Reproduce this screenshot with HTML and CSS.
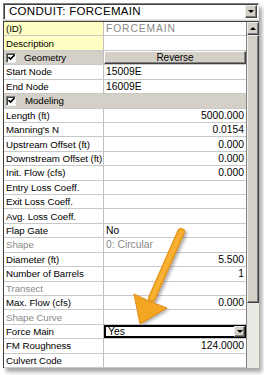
FILE: index.html
```html
<!DOCTYPE html>
<html>
<head>
<meta charset="utf-8">
<link rel="stylesheet" href="styles.css">
</head>
<body>
<div class="window">
  <div class="combo-head">
    <span class="combo-text">CONDUIT: FORCEMAIN</span>
    <span class="drop-btn"><span class="tri-down"></span></span>
  </div>
  <div class="grid-wrap">
    <div class="grid">
      <div class="row"><div class="lbl yellow">(ID)</div><div class="val gray caps">FORCEMAIN</div></div>
      <div class="row"><div class="lbl yellow">Description</div><div class="val"></div></div>
      <div class="row"><div class="lbl section"><span class="chk"><svg viewBox="0 0 7 7" width="7" height="7"><path d="M0.5 3 L2.5 5 L6.5 1" fill="none" stroke="#000" stroke-width="1.6"/></svg></span>Geometry</div><div class="val btn-cell"><span class="btn">Reverse</span></div></div>
      <div class="row"><div class="lbl">Start Node</div><div class="val">15009E</div></div>
      <div class="row"><div class="lbl">End Node</div><div class="val">16009E</div></div>
      <div class="row full"><div class="lbl section wide"><span class="chk"><svg viewBox="0 0 7 7" width="7" height="7"><path d="M0.5 3 L2.5 5 L6.5 1" fill="none" stroke="#000" stroke-width="1.6"/></svg></span>Modeling</div></div>
      <div class="row"><div class="lbl">Length (ft)</div><div class="val num">5000.000</div></div>
      <div class="row"><div class="lbl">Manning's N</div><div class="val num">0.0154</div></div>
      <div class="row"><div class="lbl">Upstream Offset (ft)</div><div class="val num">0.000</div></div>
      <div class="row"><div class="lbl">Downstream Offset (ft)</div><div class="val num">0.000</div></div>
      <div class="row"><div class="lbl">Init. Flow (cfs)</div><div class="val num">0.000</div></div>
      <div class="row"><div class="lbl">Entry Loss Coeff.</div><div class="val"></div></div>
      <div class="row"><div class="lbl">Exit Loss Coeff.</div><div class="val"></div></div>
      <div class="row"><div class="lbl">Avg. Loss Coeff.</div><div class="val"></div></div>
      <div class="row"><div class="lbl">Flap Gate</div><div class="val">No</div></div>
      <div class="row"><div class="lbl gray">Shape</div><div class="val gray">0: Circular</div></div>
      <div class="row"><div class="lbl">Diameter (ft)</div><div class="val num">5.500</div></div>
      <div class="row"><div class="lbl">Number of Barrels</div><div class="val num">1</div></div>
      <div class="row"><div class="lbl gray">Transect</div><div class="val"></div></div>
      <div class="row"><div class="lbl">Max. Flow (cfs)</div><div class="val num">0.000</div></div>
      <div class="row"><div class="lbl gray">Shape Curve</div><div class="val"></div></div>
      <div class="row"><div class="lbl">Force Main</div><div class="val combo-cell"><span class="combo-in">Yes<span class="drop-btn small"><span class="tri-down"></span></span></span></div></div>
      <div class="row"><div class="lbl">FM Roughness</div><div class="val num">124.0000</div></div>
      <div class="row"><div class="lbl">Culvert Code</div><div class="val"></div></div>
    </div>
    <div class="scrollbar">
      <div class="sb-btn"><span class="tri-up"></span></div>
      <div class="sb-thumb"></div>
      <div class="sb-track"></div>
    </div>
  </div>
</div>
<svg class="arrow" width="264" height="375" viewBox="0 0 264 375">
  <defs>
    <filter id="sh" x="-20%" y="-20%" width="140%" height="140%">
      <feGaussianBlur stdDeviation="1.5"/>
    </filter>
  </defs>
  <g transform="translate(2,2)" opacity="0.45" filter="url(#sh)">
    <line x1="181" y1="232" x2="152" y2="298" stroke="#555" stroke-width="8" stroke-linecap="round"/>
    <path d="M140 324 L134 294 L151 302 L167 308 Z" fill="#555"/>
  </g>
  <line x1="181" y1="232" x2="152" y2="298" stroke="#e8961a" stroke-width="8" stroke-linecap="round"/>
  <line x1="181" y1="232" x2="152" y2="298" stroke="#f7b032" stroke-width="5" stroke-linecap="round"/>
  <path d="M140 324 L134 294 L151 302 L167 308 Z" fill="#f4a623" stroke="#e08e16" stroke-width="1" stroke-linejoin="round"/>
</svg>
</body>
</html>
```

FILE: styles.css
```css
* { box-sizing: border-box; }
html, body { margin: 0; padding: 0; background: #fff; }
body {
  font-family: "Liberation Sans", Arial, sans-serif;
  font-size: 9.5px;
  color: #000;
  width: 264px;
  height: 375px;
  overflow: hidden;
  position: relative;
}
.window {
  margin: 3px 0 0 3px;
  width: 256px;
  height: 365px;
  display: flex;
  flex-direction: column;
  background: #d4d0c8;
  box-shadow: 3px 4px 4px rgba(0,0,0,0.35);
}
.combo-head {
  height: 17px;
  display: flex;
  align-items: center;
  justify-content: space-between;
  background: #fff;
  border-top: 1px solid #808080;
  border-left: 1px solid #808080;
  border-right: 1px solid #e8e8e8;
  border-bottom: 1px solid #e8e8e8;
  box-shadow: inset 1px 1px 0 #404040;
  padding: 1px 1px 1px 5px;
  font-size: 11.5px;
  letter-spacing: 0.3px;
}
.combo-text { line-height: 13px; }
.drop-btn {
  width: 12px;
  height: 13px;
  background: #d4d0c8;
  border-top: 1px solid #f0f0f0;
  border-left: 1px solid #f0f0f0;
  border-right: 1px solid #404040;
  border-bottom: 1px solid #404040;
  box-shadow: inset -1px -1px 0 #808080;
  display: flex;
  align-items: center;
  justify-content: center;
}
.tri-down {
  width: 0; height: 0;
  border-left: 3px solid transparent;
  border-right: 3px solid transparent;
  border-top: 3px solid #000;
}
.tri-up {
  width: 0; height: 0;
  border-left: 3px solid transparent;
  border-right: 3px solid transparent;
  border-bottom: 3px solid #000;
}
.grid-wrap {
  margin-top: 1px;
  height: 347px;
  display: flex;
  border-top: 1px solid #404040;
  border-left: 1px solid #404040;
}
.grid {
  width: 243px;
  display: grid;
  grid-template-rows: repeat(24, 1fr);
  background: #fff;
  border-right: 1px solid #808080;
}
.row {
  display: grid;
  grid-template-columns: 100px 1fr;
  border-bottom: 1px solid #c8c8c8;
  min-height: 0;
}
.row.full { grid-template-columns: 1fr; }
.lbl, .val {
  display: flex;
  align-items: center;
  white-space: nowrap;
  overflow: hidden;
}
.lbl {
  padding-left: 2px;
  border-right: 1px solid #c0c0c0;
  letter-spacing: -0.05px;
  font-size: 9.7px;
}
.val { padding: 0 2px 0 2px; font-size: 10.3px; }
.caps { letter-spacing: 0.9px; }
.num { justify-content: flex-end; }
.yellow { background: #ffffc4; }
.gray { color: #8a8a8a; }
.section {
  background: #d4d0c8;
  padding-left: 2px;
}
.section.wide { border-right: none; }
.chk {
  width: 10px;
  height: 10px;
  background: #fff;
  border-top: 1px solid #808080;
  border-left: 1px solid #808080;
  border-right: 1px solid #f0f0f0;
  border-bottom: 1px solid #f0f0f0;
  box-shadow: inset 1px 1px 0 #404040;
  display: flex;
  align-items: center;
  justify-content: center;
  margin-right: 8px;
}
.section.wide .chk { margin-right: 9px; }
.btn-cell { padding: 0; background: #d4d0c8; font-size: 10px; }
.btn {
  flex: 1;
  height: 100%;
  display: flex;
  align-items: center;
  justify-content: center;
  border-top: 1px solid #fff;
  border-left: 1px solid #fff;
  border-right: 1px solid #404040;
  border-bottom: 1px solid #404040;
  box-shadow: inset -1px -1px 0 #808080;
}
.combo-cell { padding: 0; }
.combo-in {
  flex: 1;
  height: 100%;
  display: flex;
  align-items: center;
  justify-content: space-between;
  border: 2px solid #000;
  border-right-width: 1px;
  padding-left: 2px;
}
.drop-btn.small { width: 11px; height: 11px; margin-right: 0; }
.scrollbar {
  width: 12px;
  display: flex;
  flex-direction: column;
  background: #ebe9e4;
}
.sb-btn {
  height: 13px;
  background: #d4d0c8;
  border-top: 1px solid #f0f0f0;
  border-left: 1px solid #f0f0f0;
  border-right: 1px solid #404040;
  border-bottom: 1px solid #404040;
  box-shadow: inset -1px -1px 0 #808080;
  display: flex;
  align-items: center;
  justify-content: center;
}
.sb-thumb {
  height: 268px;
  background: #d4d0c8;
  border-top: 1px solid #f0f0f0;
  border-left: 1px solid #f0f0f0;
  border-right: 1px solid #404040;
  border-bottom: 1px solid #404040;
  box-shadow: inset -1px -1px 0 #808080;
}
.sb-track { flex: 1; }
.arrow {
  position: absolute;
  left: 0;
  top: 0;
  pointer-events: none;
}
```
